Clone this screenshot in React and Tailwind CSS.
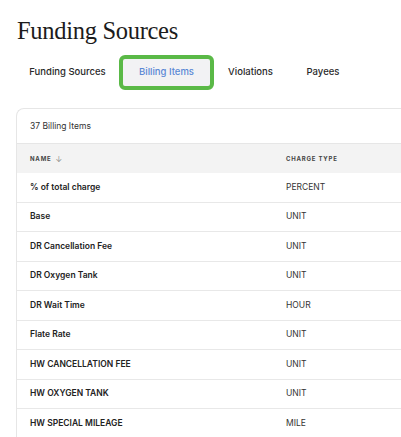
import React from "react";

const rows = [
  ["% of total charge", "PERCENT"],
  ["Base", "UNIT"],
  ["DR Cancellation Fee", "UNIT"],
  ["DR Oxygen Tank", "UNIT"],
  ["DR Wait Time", "HOUR"],
  ["Flate Rate", "UNIT"],
  ["HW CANCELLATION FEE", "UNIT"],
  ["HW OXYGEN TANK", "UNIT"],
  ["HW SPECIAL MILEAGE", "MILE"],
];

export default function App() {
  return (
    <div className="w-[401px] h-[437px] overflow-hidden bg-white" style={{ fontFamily: "Inter, 'Noto Sans', sans-serif" }}>
      <div className="pt-[15px] pl-[17px]">
        <h1 className="text-[24.5px] leading-[31px] tracking-[-0.3px] text-[#1c1c1c]" style={{ fontFamily: "'Liberation Serif', serif" }}>
          Funding Sources
        </h1>
      </div>
      <div className="flex items-center mt-[9px] pl-[16px] h-[35px]">
        <div className="w-[103px] flex justify-center text-[9.5px] font-medium text-[#2a2a2a]">Funding Sources</div>
        <div className="w-[95px] h-[35px] rounded-[6px] border-[4px] border-[#5ab947] bg-[#f2f2f4] flex items-center justify-center text-[9.5px] font-medium text-[#5a88d4]">
          Billing Items
        </div>
        <div className="w-[73px] flex justify-center text-[9.5px] font-medium text-[#2a2a2a]">Violations</div>
        <div className="w-[72px] flex justify-center text-[9.5px] font-medium text-[#2a2a2a]">Payees</div>
      </div>
      <div className="ml-[16px] mt-[18px] border-l border-t border-[#e6e6e6] rounded-tl-[8px]">
        <div className="h-[35px] flex items-center pl-[13px] text-[8.5px] text-[#333] border-b border-[#e6e6e6]">
          37 Billing Items
        </div>
        <div className="h-[29px] flex items-center bg-[#f3f3f3] text-[6px] font-bold tracking-[0.8px] text-[#444]">
          <div className="w-[269px] pl-[13px] flex items-center gap-[4px]">
            NAME <span className="text-[8px] font-light text-[#777]">↓</span>
          </div>
          <div>CHARGE TYPE</div>
        </div>
        {rows.map(([name, type]) => (
          <div key={name} className="h-[29.5px] flex items-center border-b border-[#e8e8e8] text-[8.5px] text-[#222]">
            <div className="w-[269px] pl-[13px] font-semibold">{name}</div>
            <div className="text-[#333]">{type}</div>
          </div>
        ))}
      </div>
    </div>
  );
}
